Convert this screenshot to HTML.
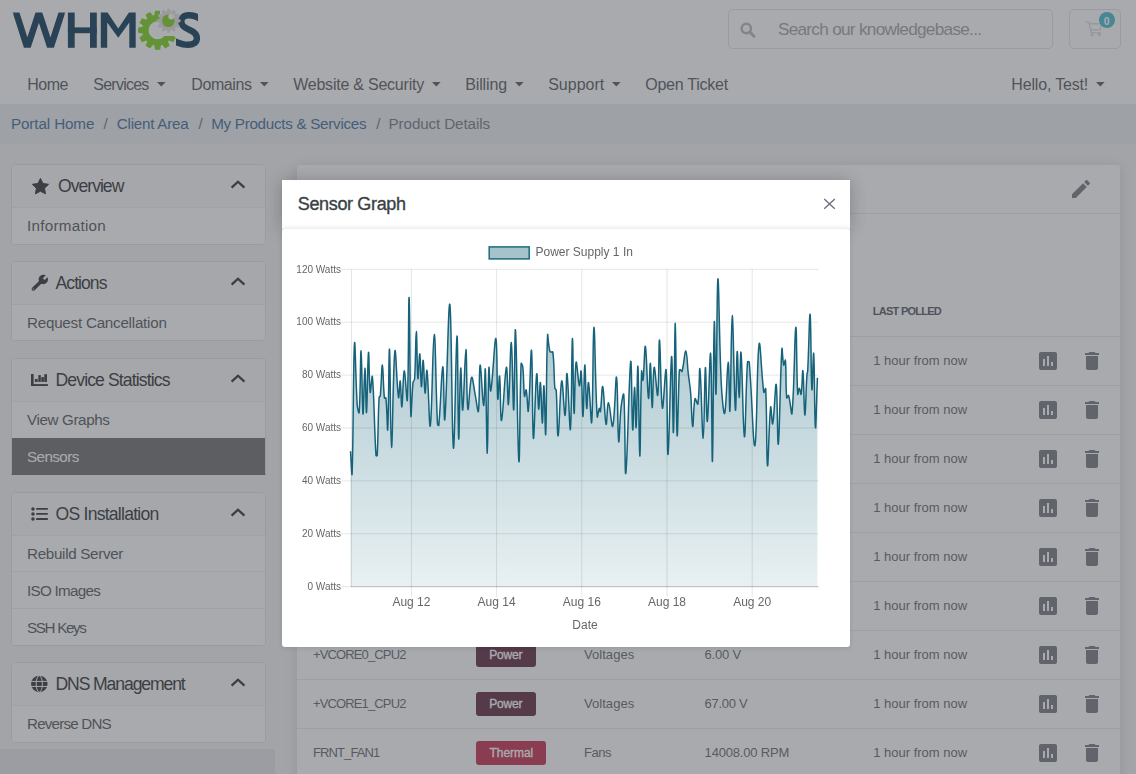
<!DOCTYPE html>
<html lang="en"><head><meta charset="utf-8"><title>Product Details</title>
<style>
*{box-sizing:border-box;margin:0;padding:0}
html,body{width:1136px;height:774px;overflow:hidden;background:#f1f2f4}
body{font-family:"Liberation Sans",sans-serif;position:relative}
.abs{position:absolute}
.t{position:absolute;white-space:nowrap;line-height:1;display:block}
#page{position:absolute;left:0;top:0;width:1136px;height:774px;overflow:hidden;background:#f1f2f4}
#hdr{position:absolute;left:0;top:0;width:1136px;height:104px;background:#fff}
#bc{position:absolute;left:0;top:104px;width:1136px;height:39.5px;background:#e9ecef}
.sb{position:absolute;left:11px;width:255px;background:#fff;border:1px solid #e0e1e4;border-radius:4px;overflow:hidden}
.sbh{position:absolute;left:0;top:0;width:100%;background:#f8f8f9;border-bottom:1px solid #e0e1e4}
.sbr{position:absolute;left:0;width:100%;border-top:1px solid #ebecee;background:#fff}
.sbr.act{background:#666;border-color:#666}
#card{position:absolute;left:297px;top:165px;width:823px;height:640px;background:#fff;border-radius:3px;box-shadow:0 1px 12px rgba(20,25,40,.13)}
.hl{position:absolute;left:0;width:100%;height:1px;background:#e6e8ee}
.badge{position:absolute;height:24px;border-radius:3px}
#ov{position:absolute;left:0;top:0;width:1136px;height:774px;background:rgba(83,85,91,.5)}
#mb{position:absolute;left:282px;top:228px;width:568px;height:419px;background:#fff;border-top:1px solid #eceef3;border-radius:3px;box-shadow:0 1px 5px rgba(0,0,0,.10)}
#mh{position:absolute;left:282px;top:180px;width:568px;height:48.5px;background:linear-gradient(#fff 0,#fff 42px,#fbfbfc 48.5px);box-shadow:0 1px 17px rgba(0,0,0,.23)}
svg{position:absolute;overflow:visible}
.cv{opacity:.999;will-change:opacity}
</style></head><body>
<div id="page">
<div id="hdr">
<svg style="left:0;top:0" width="220" height="60" viewBox="0 0 220 60"><defs><clipPath id="lc"><rect x="0" y="12.55" width="220" height="35.3"/></clipPath></defs><g clip-path="url(#lc)"><polyline points="16.1,12.55 27.3,47.8 38.9,12.55 50.5,47.8 61.85,12.55" fill="none" stroke="#002e50" stroke-width="6.45" stroke-linejoin="miter" stroke-miterlimit="10" stroke-linecap="butt" transform="translate(0,0)"/><line x1="16.1" y1="12.55" x2="14.5" y2="7.5" stroke="#002e50" stroke-width="6.45"/><line x1="61.85" y1="12.55" x2="63.5" y2="7.4" stroke="#002e50" stroke-width="6.45"/></g><g fill="#002e50"><rect x="67.9" y="12.55" width="6.8" height="35.25"/><rect x="90" y="12.55" width="6.8" height="35.25"/><rect x="67.9" y="27.4" width="28.9" height="5.8"/><polygon points="100.8,47.8 100.8,12.55 107.6,12.55 118.25,28.6 128.9,12.55 135.7,12.55 135.7,47.8 129.3,47.8 129.3,22.6 118.25,37.8 107.2,22.6 107.2,47.8"/></g><defs><clipPath id="gc"><path d="M120 -10H160V35.9H215V80H120Z"/></clipPath></defs><g clip-path="url(#gc)"><path d="M154.26 15.27L155.03 10.67L160.17 10.67L160.94 15.27L162.18 15.60L165.14 12.00L169.59 14.57L167.96 18.94L168.86 19.84L173.23 18.21L175.80 22.66L172.20 25.62L172.53 26.86L177.13 27.63L177.13 32.77L172.53 33.54L172.20 34.78L175.80 37.74L173.23 42.19L168.86 40.56L167.96 41.46L169.59 45.83L165.14 48.40L162.18 44.80L160.94 45.13L160.17 49.73L155.03 49.73L154.26 45.13L153.02 44.80L150.06 48.40L145.61 45.83L147.24 41.46L146.34 40.56L141.97 42.19L139.40 37.74L143.00 34.78L142.67 33.54L138.07 32.77L138.07 27.63L142.67 26.86L143.00 25.62L139.40 22.66L141.97 18.21L146.34 19.84L147.24 18.94L145.61 14.57L150.06 12.00L153.02 15.60Z M157.60 21.20 a9 9 0 1 0 0.01 0Z" fill="#72d010" fill-rule="evenodd"/></g><defs><clipPath id="sc"><path d="M176 0H198V25H202V60H176Z"/></clipPath></defs><g clip-path="url(#sc)"><path d="M201 19.6C197.6 16.4 193.6 15.2 188.4 15.2C183.6 15.2 181.3 18.2 181.3 21.6C181.3 25.8 184.6 27.9 189.2 29.8C194.4 31.9 196.9 34 196.9 38.3C196.9 42.5 193.4 44.8 188 44.8C183 44.8 178.4 43.2 173 40.6" fill="none" stroke="#002e50" stroke-width="6.4"/></g><path d="M166.90 11.37L167.45 8.87L169.95 8.87L170.50 11.37L171.86 11.73L173.58 9.84L175.75 11.09L174.97 13.53L175.97 14.53L178.41 13.75L179.66 15.92L177.77 17.64L178.13 19.00L180.63 19.55L180.63 22.05L178.13 22.60L177.77 23.96L179.66 25.68L178.41 27.85L175.97 27.07L174.97 28.07L175.75 30.51L173.58 31.76L171.86 29.87L170.50 30.23L169.95 32.73L167.45 32.73L166.90 30.23L165.54 29.87L163.82 31.76L161.65 30.51L162.43 28.07L161.43 27.07L158.99 27.85L157.74 25.68L159.63 23.96L159.27 22.60L156.77 22.05L156.77 19.55L159.27 19.00L159.63 17.64L157.74 15.92L158.99 13.75L161.43 14.53L162.43 13.53L161.65 11.09L163.82 9.84L165.54 11.73Z" fill="#dedde0"/><circle cx="168.4" cy="20.8" r="6.3" fill="#72d010"/><circle cx="171.3" cy="16.6" r="3.0" fill="#fff"/></svg>
<div class="abs" style="left:728px;top:9px;width:324.5px;height:39.5px;border:1px solid #dfe1e5;border-radius:5px;background:#fff"></div>
<svg style="left:740px;top:22px" width="16" height="16" viewBox="0 0 16 16"><circle cx="6.3" cy="6.5" r="4.65" fill="none" stroke="#b3b4b8" stroke-width="2.5"/><line x1="9.9" y1="10.1" x2="14" y2="14.2" stroke="#b3b4b8" stroke-width="2.9" stroke-linecap="round"/></svg>
<span class="t" style="left:777.90px;top:20.54px;font-size:17.2px;color:#989ba2;letter-spacing:-0.711px;">Search our knowledgebase...</span>
<div class="abs" style="left:1069px;top:9px;width:52px;height:39.5px;border:1px solid #dfe1e5;border-radius:5px;background:#fff"></div>
<svg style="left:1085px;top:20px" width="20" height="18" viewBox="0 0 20 18"><g fill="none" stroke="#d4d5d9" stroke-width="1.15" stroke-linejoin="round" stroke-linecap="round"><path d="M1.2 2.1h2.6l2.4 10.6h9.4"/><path d="M4.4 3.9h11.9l-1.1 5.9H5.7"/><circle cx="7.2" cy="14.6" r="1.2"/><circle cx="14.3" cy="14.6" r="1.2"/></g></svg>
<div class="abs" style="left:1098.9px;top:12px;width:16px;height:16px;border-radius:8px;background:#39b9cb"></div>
<span class="t" style="left:1103.70px;top:15.61px;font-size:10.5px;color:#fff;font-weight:700;">0</span>
<span class="t" style="left:27.20px;top:76.56px;font-size:16px;color:#4c5158;letter-spacing:-0.494px;">Home</span>
<span class="t" style="left:93.30px;top:76.56px;font-size:16px;color:#4c5158;letter-spacing:-0.765px;">Services</span>
<svg style="left:157.4px;top:82.2px" width="9" height="5" viewBox="0 0 9 5"><path d="M0 0h8.6L4.3 4.6z" fill="#4c5158"/></svg>
<span class="t" style="left:191.30px;top:76.56px;font-size:16px;color:#4c5158;letter-spacing:-0.406px;">Domains</span>
<svg style="left:260.0px;top:82.2px" width="9" height="5" viewBox="0 0 9 5"><path d="M0 0h8.6L4.3 4.6z" fill="#4c5158"/></svg>
<span class="t" style="left:293.20px;top:76.56px;font-size:16px;color:#4c5158;letter-spacing:-0.228px;">Website &amp; Security</span>
<svg style="left:432.0px;top:82.2px" width="9" height="5" viewBox="0 0 9 5"><path d="M0 0h8.6L4.3 4.6z" fill="#4c5158"/></svg>
<span class="t" style="left:465.20px;top:76.56px;font-size:16px;color:#4c5158;letter-spacing:-0.115px;">Billing</span>
<svg style="left:515.0px;top:82.2px" width="9" height="5" viewBox="0 0 9 5"><path d="M0 0h8.6L4.3 4.6z" fill="#4c5158"/></svg>
<span class="t" style="left:548.20px;top:76.56px;font-size:16px;color:#4c5158;letter-spacing:-0.007px;">Support</span>
<svg style="left:612.0px;top:82.2px" width="9" height="5" viewBox="0 0 9 5"><path d="M0 0h8.6L4.3 4.6z" fill="#4c5158"/></svg>
<span class="t" style="left:645.20px;top:76.56px;font-size:16px;color:#4c5158;letter-spacing:-0.238px;">Open Ticket</span>
<span class="t" style="left:1011.30px;top:76.56px;font-size:16px;color:#4c5158;letter-spacing:-0.168px;">Hello, Test!</span>
<svg style="left:1096.0px;top:82.2px" width="9" height="5" viewBox="0 0 9 5"><path d="M0 0h8.6L4.3 4.6z" fill="#4c5158"/></svg>
</div>
<div id="bc"></div>
<span class="t" style="left:11.00px;top:116.23px;font-size:15.2px;color:#336699;letter-spacing:-0.108px;">Portal Home</span>
<span class="t" style="left:103.60px;top:116.23px;font-size:15.2px;color:#6c757d;">/</span>
<span class="t" style="left:116.80px;top:116.23px;font-size:15.2px;color:#336699;letter-spacing:-0.236px;">Client Area</span>
<span class="t" style="left:198.60px;top:116.23px;font-size:15.2px;color:#6c757d;">/</span>
<span class="t" style="left:211.20px;top:116.23px;font-size:15.2px;color:#336699;letter-spacing:-0.278px;">My Products &amp; Services</span>
<span class="t" style="left:376.20px;top:116.23px;font-size:15.2px;color:#6c757d;">/</span>
<span class="t" style="left:388.60px;top:116.23px;font-size:15.2px;color:#6c757d;letter-spacing:-0.112px;">Product Details</span>
<div class="abs" style="left:0;top:748.8px;width:275px;height:30px;background:#e2e5ea"></div>
<div class="sb" style="top:164.15px;height:80.40px">
<div class="sbh" style="height:42.7px"></div>
<div class="sbr" style="top:41.70px;height:37.70px"></div>
</div>
<span class="t" style="left:58.00px;top:178.20px;font-size:17.6px;color:#23272c;letter-spacing:-0.993px;">Overview</span>
<svg style="left:230.0px;top:179.0px" width="16" height="10" viewBox="0 0 16 10"><polyline points="1.6,8.6 8,2.7 14.4,8.6" fill="none" stroke="#23272c" stroke-width="2.3" stroke-linejoin="miter"/></svg>
<span class="t" style="left:27.00px;top:218.28px;font-size:15.2px;color:#495057;letter-spacing:0.276px;">Information</span>
<svg style="left:0;top:0" width="60" height="200"><polygon points="40.45,178.40 42.95,183.51 48.58,184.31 44.49,188.26 45.48,193.87 40.45,191.20 35.42,193.87 36.41,188.26 32.32,184.31 37.95,183.51" fill="#23272c" stroke="#23272c" stroke-width="1.0" stroke-linejoin="round"/></svg>
<div class="sb" style="top:261.10px;height:80.40px">
<div class="sbh" style="height:42.7px"></div>
<div class="sbr" style="top:41.70px;height:37.70px"></div>
</div>
<span class="t" style="left:55.50px;top:275.30px;font-size:17.6px;color:#23272c;letter-spacing:-0.953px;">Actions</span>
<svg style="left:230.0px;top:275.9px" width="16" height="10" viewBox="0 0 16 10"><polyline points="1.6,8.6 8,2.7 14.4,8.6" fill="none" stroke="#23272c" stroke-width="2.3" stroke-linejoin="miter"/></svg>
<span class="t" style="left:27.00px;top:315.23px;font-size:15.2px;color:#495057;letter-spacing:-0.236px;">Request Cancellation</span>
<svg style="left:0;top:0" width="60" height="300"><line x1="33.4" y1="289.0" x2="41.6" y2="280.9" stroke="#23272c" stroke-width="3.5" stroke-linecap="round"/><g transform="translate(43.3,279.5) rotate(-45)"><circle r="4.7" fill="#23272c"/><rect x="0.6" y="-1.25" width="6" height="2.5" fill="#f8f8f9"/></g><circle cx="33.3" cy="289.1" r="0.65" fill="#f8f8f9"/></svg>
<div class="sb" style="top:358.30px;height:117.10px;border-radius:4px 4px 0 0;border-bottom-color:#666">
<div class="sbh" style="height:42.7px"></div>
<div class="sbr" style="top:41.70px;height:37.70px"></div>
<div class="sbr act" style="top:78.40px;height:37.70px"></div>
</div>
<span class="t" style="left:55.50px;top:372.30px;font-size:17.6px;color:#23272c;letter-spacing:-0.882px;">Device Statistics</span>
<svg style="left:230.0px;top:373.1px" width="16" height="10" viewBox="0 0 16 10"><polyline points="1.6,8.6 8,2.7 14.4,8.6" fill="none" stroke="#23272c" stroke-width="2.3" stroke-linejoin="miter"/></svg>
<span class="t" style="left:27.00px;top:412.43px;font-size:15.2px;color:#495057;letter-spacing:-0.374px;">View Graphs</span>
<span class="t" style="left:27.00px;top:449.13px;font-size:15.2px;color:#fff;letter-spacing:-0.577px;">Sensors</span>
<svg style="left:31px;top:373.8px" width="17" height="12" viewBox="0 0 17 12"><g fill="#23272c"><rect x="0" y="0" width="2.6" height="12"/><rect x="0" y="10.1" width="16.9" height="1.9"/><rect x="3.85" y="5" width="2.85" height="2.9"/><rect x="7.3" y="1.1" width="2.5" height="6.8"/><rect x="10.3" y="3.05" width="2.6" height="4.85"/><rect x="13.25" y="0.2" width="2.75" height="7.7"/></g></svg>
<div class="sb" style="top:492.00px;height:153.80px">
<div class="sbh" style="height:42.7px"></div>
<div class="sbr" style="top:41.70px;height:37.70px"></div>
<div class="sbr" style="top:78.40px;height:37.70px"></div>
<div class="sbr" style="top:115.10px;height:37.70px"></div>
</div>
<span class="t" style="left:55.50px;top:506.10px;font-size:17.6px;color:#23272c;letter-spacing:-0.762px;">OS Installation</span>
<svg style="left:230.0px;top:506.8px" width="16" height="10" viewBox="0 0 16 10"><polyline points="1.6,8.6 8,2.7 14.4,8.6" fill="none" stroke="#23272c" stroke-width="2.3" stroke-linejoin="miter"/></svg>
<span class="t" style="left:27.00px;top:546.13px;font-size:15.2px;color:#495057;letter-spacing:-0.311px;">Rebuild Server</span>
<span class="t" style="left:27.00px;top:582.83px;font-size:15.2px;color:#495057;letter-spacing:-0.717px;">ISO Images</span>
<span class="t" style="left:27.00px;top:619.53px;font-size:15.2px;color:#495057;letter-spacing:-1.324px;">SSH Keys</span>
<svg style="left:31px;top:507px" width="17" height="14" viewBox="0 0 17 14"><circle cx="1.95" cy="1.90" r="1.75" fill="#23272c"/><rect x="5.1" y="0.95" width="11.8" height="1.9" rx="0.5" fill="#23272c"/><circle cx="1.95" cy="6.90" r="1.75" fill="#23272c"/><rect x="5.1" y="5.95" width="11.8" height="1.9" rx="0.5" fill="#23272c"/><circle cx="1.95" cy="12.00" r="1.75" fill="#23272c"/><rect x="5.1" y="11.05" width="11.8" height="1.9" rx="0.5" fill="#23272c"/></svg>
<div class="sb" style="top:662.30px;height:80.40px">
<div class="sbh" style="height:42.7px"></div>
<div class="sbr" style="top:41.70px;height:37.70px"></div>
</div>
<span class="t" style="left:55.50px;top:676.10px;font-size:17.6px;color:#23272c;letter-spacing:-1.114px;">DNS Management</span>
<svg style="left:230.0px;top:677.1px" width="16" height="10" viewBox="0 0 16 10"><polyline points="1.6,8.6 8,2.7 14.4,8.6" fill="none" stroke="#23272c" stroke-width="2.3" stroke-linejoin="miter"/></svg>
<span class="t" style="left:27.00px;top:716.43px;font-size:15.2px;color:#495057;letter-spacing:-0.812px;">Reverse DNS</span>
<svg style="left:0;top:0" width="60" height="700"><circle cx="39.3" cy="683.9" r="8.25" fill="#23272c"/><g stroke="#f8f8f9" stroke-width="1.0" fill="none"><ellipse cx="39.3" cy="683.9" rx="3.1" ry="8.25"/><line x1="30" y1="681.4" x2="49" y2="681.4"/><line x1="30" y1="686.45" x2="49" y2="686.45"/></g></svg>
<div id="card">
<div class="hl" style="top:48px"></div>
<div class="hl" style="top:171px"></div>
<div class="hl" style="top:220px"></div>
<div class="hl" style="top:269px"></div>
<div class="hl" style="top:318px"></div>
<div class="hl" style="top:367px"></div>
<div class="hl" style="top:416px"></div>
<div class="hl" style="top:465px"></div>
<div class="hl" style="top:514px"></div>
<div class="hl" style="top:563px"></div>
<div class="hl" style="top:612px"></div>
</div>
<svg style="left:1069px;top:176.8px" width="24" height="24" viewBox="0 0 24 24"><path fill="#6e727a" d="M3 17.25V21h3.75L17.81 9.94l-3.75-3.75L3 17.25zM20.71 7.04c.39-.39.39-1.02 0-1.41l-2.34-2.34c-.39-.39-1.02-.39-1.41 0l-1.83 1.83 3.75 3.75 1.83-1.83z"/></svg>
<span class="t" style="left:872.80px;top:305.79px;font-size:11px;color:#4a4f59;letter-spacing:-0.739px;font-weight:700;">LAST POLLED</span>
<span class="t" style="left:873.20px;top:353.90px;font-size:13px;color:#5a5f68;">1 hour from now</span>
<svg style="left:1036.4px;top:349.0px" width="24" height="24" viewBox="0 0 24 24"><path fill="#6e727a" d="M19 3H5c-1.1 0-2 .9-2 2v14c0 1.1.9 2 2 2h14c1.1 0 2-.9 2-2V5c0-1.1-.9-2-2-2zM9 17H7v-7h2v7zm4 0h-2V7h2v10zm4 0h-2v-4h2v4z"/></svg>
<svg style="left:1079.5px;top:349.0px" width="24" height="24" viewBox="0 0 24 24"><path fill="#6e727a" d="M6 19c0 1.1.9 2 2 2h8c1.1 0 2-.9 2-2V7H6v12zM19 4h-3.5l-1-1h-5l-1 1H5v2h14V4z"/></svg>
<span class="t" style="left:873.20px;top:402.90px;font-size:13px;color:#5a5f68;">1 hour from now</span>
<svg style="left:1036.4px;top:398.0px" width="24" height="24" viewBox="0 0 24 24"><path fill="#6e727a" d="M19 3H5c-1.1 0-2 .9-2 2v14c0 1.1.9 2 2 2h14c1.1 0 2-.9 2-2V5c0-1.1-.9-2-2-2zM9 17H7v-7h2v7zm4 0h-2V7h2v10zm4 0h-2v-4h2v4z"/></svg>
<svg style="left:1079.5px;top:398.0px" width="24" height="24" viewBox="0 0 24 24"><path fill="#6e727a" d="M6 19c0 1.1.9 2 2 2h8c1.1 0 2-.9 2-2V7H6v12zM19 4h-3.5l-1-1h-5l-1 1H5v2h14V4z"/></svg>
<span class="t" style="left:873.20px;top:451.90px;font-size:13px;color:#5a5f68;">1 hour from now</span>
<svg style="left:1036.4px;top:447.0px" width="24" height="24" viewBox="0 0 24 24"><path fill="#6e727a" d="M19 3H5c-1.1 0-2 .9-2 2v14c0 1.1.9 2 2 2h14c1.1 0 2-.9 2-2V5c0-1.1-.9-2-2-2zM9 17H7v-7h2v7zm4 0h-2V7h2v10zm4 0h-2v-4h2v4z"/></svg>
<svg style="left:1079.5px;top:447.0px" width="24" height="24" viewBox="0 0 24 24"><path fill="#6e727a" d="M6 19c0 1.1.9 2 2 2h8c1.1 0 2-.9 2-2V7H6v12zM19 4h-3.5l-1-1h-5l-1 1H5v2h14V4z"/></svg>
<span class="t" style="left:873.20px;top:500.90px;font-size:13px;color:#5a5f68;">1 hour from now</span>
<svg style="left:1036.4px;top:496.0px" width="24" height="24" viewBox="0 0 24 24"><path fill="#6e727a" d="M19 3H5c-1.1 0-2 .9-2 2v14c0 1.1.9 2 2 2h14c1.1 0 2-.9 2-2V5c0-1.1-.9-2-2-2zM9 17H7v-7h2v7zm4 0h-2V7h2v10zm4 0h-2v-4h2v4z"/></svg>
<svg style="left:1079.5px;top:496.0px" width="24" height="24" viewBox="0 0 24 24"><path fill="#6e727a" d="M6 19c0 1.1.9 2 2 2h8c1.1 0 2-.9 2-2V7H6v12zM19 4h-3.5l-1-1h-5l-1 1H5v2h14V4z"/></svg>
<span class="t" style="left:873.20px;top:549.90px;font-size:13px;color:#5a5f68;">1 hour from now</span>
<svg style="left:1036.4px;top:545.0px" width="24" height="24" viewBox="0 0 24 24"><path fill="#6e727a" d="M19 3H5c-1.1 0-2 .9-2 2v14c0 1.1.9 2 2 2h14c1.1 0 2-.9 2-2V5c0-1.1-.9-2-2-2zM9 17H7v-7h2v7zm4 0h-2V7h2v10zm4 0h-2v-4h2v4z"/></svg>
<svg style="left:1079.5px;top:545.0px" width="24" height="24" viewBox="0 0 24 24"><path fill="#6e727a" d="M6 19c0 1.1.9 2 2 2h8c1.1 0 2-.9 2-2V7H6v12zM19 4h-3.5l-1-1h-5l-1 1H5v2h14V4z"/></svg>
<span class="t" style="left:873.20px;top:598.90px;font-size:13px;color:#5a5f68;">1 hour from now</span>
<svg style="left:1036.4px;top:594.0px" width="24" height="24" viewBox="0 0 24 24"><path fill="#6e727a" d="M19 3H5c-1.1 0-2 .9-2 2v14c0 1.1.9 2 2 2h14c1.1 0 2-.9 2-2V5c0-1.1-.9-2-2-2zM9 17H7v-7h2v7zm4 0h-2V7h2v10zm4 0h-2v-4h2v4z"/></svg>
<svg style="left:1079.5px;top:594.0px" width="24" height="24" viewBox="0 0 24 24"><path fill="#6e727a" d="M6 19c0 1.1.9 2 2 2h8c1.1 0 2-.9 2-2V7H6v12zM19 4h-3.5l-1-1h-5l-1 1H5v2h14V4z"/></svg>
<span class="t" style="left:873.20px;top:647.90px;font-size:13px;color:#5a5f68;">1 hour from now</span>
<svg style="left:1036.4px;top:643.0px" width="24" height="24" viewBox="0 0 24 24"><path fill="#6e727a" d="M19 3H5c-1.1 0-2 .9-2 2v14c0 1.1.9 2 2 2h14c1.1 0 2-.9 2-2V5c0-1.1-.9-2-2-2zM9 17H7v-7h2v7zm4 0h-2V7h2v10zm4 0h-2v-4h2v4z"/></svg>
<svg style="left:1079.5px;top:643.0px" width="24" height="24" viewBox="0 0 24 24"><path fill="#6e727a" d="M6 19c0 1.1.9 2 2 2h8c1.1 0 2-.9 2-2V7H6v12zM19 4h-3.5l-1-1h-5l-1 1H5v2h14V4z"/></svg>
<span class="t" style="left:873.20px;top:696.90px;font-size:13px;color:#5a5f68;">1 hour from now</span>
<svg style="left:1036.4px;top:692.0px" width="24" height="24" viewBox="0 0 24 24"><path fill="#6e727a" d="M19 3H5c-1.1 0-2 .9-2 2v14c0 1.1.9 2 2 2h14c1.1 0 2-.9 2-2V5c0-1.1-.9-2-2-2zM9 17H7v-7h2v7zm4 0h-2V7h2v10zm4 0h-2v-4h2v4z"/></svg>
<svg style="left:1079.5px;top:692.0px" width="24" height="24" viewBox="0 0 24 24"><path fill="#6e727a" d="M6 19c0 1.1.9 2 2 2h8c1.1 0 2-.9 2-2V7H6v12zM19 4h-3.5l-1-1h-5l-1 1H5v2h14V4z"/></svg>
<span class="t" style="left:873.20px;top:745.90px;font-size:13px;color:#5a5f68;">1 hour from now</span>
<svg style="left:1036.4px;top:741.0px" width="24" height="24" viewBox="0 0 24 24"><path fill="#6e727a" d="M19 3H5c-1.1 0-2 .9-2 2v14c0 1.1.9 2 2 2h14c1.1 0 2-.9 2-2V5c0-1.1-.9-2-2-2zM9 17H7v-7h2v7zm4 0h-2V7h2v10zm4 0h-2v-4h2v4z"/></svg>
<svg style="left:1079.5px;top:741.0px" width="24" height="24" viewBox="0 0 24 24"><path fill="#6e727a" d="M6 19c0 1.1.9 2 2 2h8c1.1 0 2-.9 2-2V7H6v12zM19 4h-3.5l-1-1h-5l-1 1H5v2h14V4z"/></svg>
<span class="t" style="left:313.00px;top:647.90px;font-size:13px;color:#5a5f68;letter-spacing:-0.869px;">+VCORE0_CPU2</span>
<div class="badge" style="left:476px;top:643px;width:60px;background:#561f36"></div>
<span class="t" style="left:489.30px;top:649.24px;font-size:12px;color:#fff;letter-spacing:-0.179px;-webkit-text-stroke:0.3px #fff;">Power</span>
<span class="t" style="left:584.00px;top:647.90px;font-size:13px;color:#5a5f68;letter-spacing:0.046px;">Voltages</span>
<span class="t" style="left:704.60px;top:647.90px;font-size:13px;color:#5a5f68;letter-spacing:-0.217px;">6.00 V</span>
<span class="t" style="left:313.00px;top:696.90px;font-size:13px;color:#5a5f68;letter-spacing:-0.869px;">+VCORE1_CPU2</span>
<div class="badge" style="left:476px;top:692px;width:60px;background:#561f36"></div>
<span class="t" style="left:489.30px;top:698.24px;font-size:12px;color:#fff;letter-spacing:-0.179px;-webkit-text-stroke:0.3px #fff;">Power</span>
<span class="t" style="left:584.00px;top:696.90px;font-size:13px;color:#5a5f68;letter-spacing:0.046px;">Voltages</span>
<span class="t" style="left:704.60px;top:696.90px;font-size:13px;color:#5a5f68;letter-spacing:-0.269px;">67.00 V</span>
<span class="t" style="left:313.00px;top:745.90px;font-size:13px;color:#5a5f68;letter-spacing:-0.900px;">FRNT_FAN1</span>
<div class="badge" style="left:476px;top:741px;width:70px;background:#c12346"></div>
<span class="t" style="left:489.50px;top:747.24px;font-size:12px;color:#fff;letter-spacing:-0.052px;-webkit-text-stroke:0.3px #fff;">Thermal</span>
<span class="t" style="left:584.00px;top:745.90px;font-size:13px;color:#5a5f68;letter-spacing:-0.434px;">Fans</span>
<span class="t" style="left:704.60px;top:745.90px;font-size:13px;color:#5a5f68;letter-spacing:-0.175px;">14008.00 RPM</span>
</div>
<div id="ov"></div>
<div id="mh"></div><div id="mb"></div>
<span class="t" style="left:297.80px;top:194.76px;font-size:18px;color:#3a3f45;letter-spacing:-0.351px;-webkit-text-stroke:0.35px #3a3f45;">Sensor Graph</span>
<svg style="left:823px;top:198px" width="13" height="12" viewBox="0 0 13 12"><path d="M1.2 1.0L11.8 10.8M11.8 1.0L1.2 10.8" stroke="#6b707a" stroke-width="1.35" fill="none"/></svg>
<svg style="left:0;top:0" width="1136" height="774" viewBox="0 0 1136 774"><defs><linearGradient id="cg" gradientUnits="userSpaceOnUse" x1="0" y1="269" x2="0" y2="587"><stop offset="0" stop-color="#1d6a7e" stop-opacity="0.42"/><stop offset="1" stop-color="#1d6a7e" stop-opacity="0.10"/></linearGradient></defs><path d="M350.5 451.2C351.1 460.1 351.9 479.8 352.1 473.5C353.5 436.8 353.1 361.8 354.5 343.6C355.2 334.8 355.6 381.1 357.3 406.0C357.5 408.7 359.0 414.7 359.2 412.5C360.6 392.6 360.3 350.5 361.1 350.8C361.9 351.1 362.1 410.0 363.0 414.0C363.6 416.9 364.2 368.5 364.9 368.2C365.6 367.9 365.9 415.2 366.5 412.5C367.3 408.9 367.6 357.4 368.5 352.5C369.1 349.3 369.1 385.4 370.2 392.3C370.6 395.0 372.0 372.5 372.4 376.7C374.3 397.8 374.1 424.5 376.0 455.6C376.0 456.1 377.2 456.1 377.2 455.6C378.4 432.8 377.9 420.6 379.1 397.5C379.1 396.7 380.2 396.6 380.3 395.8C381.5 383.7 381.6 364.7 382.4 365.1C383.2 365.6 383.1 385.4 384.4 398.0C384.5 398.6 385.8 397.4 385.9 398.0C387.2 410.0 387.3 434.9 387.7 429.4C388.7 415.4 388.8 345.9 389.5 349.2C390.3 353.2 390.4 447.1 391.5 447.5C392.6 447.9 393.0 364.7 394.9 351.2C395.8 344.7 396.9 388.7 398.5 397.5C399.1 400.6 399.7 379.5 400.2 381.0C401.0 383.3 401.2 408.5 401.9 406.8C402.8 404.4 403.0 372.4 404.2 370.9C405.2 369.7 406.9 406.5 407.3 400.0C408.8 377.2 408.4 294.6 409.1 297.5C409.9 300.8 409.7 388.8 410.9 415.4C411.2 422.8 411.7 395.6 413.0 382.6C413.2 381.0 414.5 380.6 414.6 379.0C415.8 360.2 415.6 331.7 416.3 331.6C417.0 331.5 417.0 372.8 417.9 378.6C418.4 381.7 419.2 352.5 419.8 353.9C420.6 355.7 420.6 385.2 421.4 386.6C422.0 387.8 422.5 359.2 423.2 360.4C424.0 361.8 424.2 390.7 425.1 393.1C425.7 394.8 426.4 366.9 427.0 370.7C428.5 380.0 429.2 431.4 430.3 425.9C432.1 416.8 432.7 334.8 434.2 334.4C435.6 334.0 435.7 388.4 437.5 424.0C437.5 424.8 438.7 426.1 438.8 425.4C440.9 403.2 441.5 368.1 442.8 366.8C443.9 365.7 443.9 427.2 444.8 419.4C446.7 402.2 448.3 299.2 449.8 304.3C451.7 310.7 451.8 440.8 453.4 448.0C454.7 453.6 455.9 338.0 457.0 336.1C458.0 334.3 457.8 431.2 458.7 438.8C459.3 444.0 459.7 375.5 460.7 368.3C461.3 364.0 461.9 413.1 462.7 410.0C463.9 405.5 464.9 349.6 465.9 349.4C466.9 349.2 466.4 401.9 467.9 409.2C468.7 413.1 469.7 381.1 471.6 377.4C472.6 375.3 473.8 387.8 475.2 394.7C476.5 401.3 477.9 414.5 478.4 411.3C479.8 402.6 479.0 366.3 480.1 365.1C481.1 364.0 482.5 404.6 483.6 405.5C484.6 406.3 484.9 363.6 485.3 369.4C486.3 382.8 486.6 453.6 487.3 453.3C488.0 453.0 487.8 387.5 488.9 367.8C489.2 362.5 489.9 394.3 490.8 390.7C492.7 382.5 494.6 336.9 495.9 338.4C497.4 340.2 496.7 388.1 497.8 399.0C498.2 403.1 499.1 373.2 499.6 376.1C500.6 381.8 500.3 422.1 501.5 420.5C503.0 418.6 504.8 371.1 506.4 367.3C507.5 364.7 507.7 408.1 508.4 404.4C509.6 398.2 510.3 341.5 511.3 342.6C512.4 343.8 512.9 412.3 513.7 410.0C514.6 407.3 514.7 322.4 515.5 330.2C516.8 343.0 517.6 453.7 518.9 461.4C519.9 467.1 519.6 400.1 521.1 363.7C521.2 362.3 522.6 365.5 522.8 367.0C524.0 378.6 523.4 388.8 524.5 396.3C524.8 398.0 525.8 388.5 526.2 389.9C527.4 394.3 527.8 415.0 528.3 410.9C529.9 399.2 530.7 345.9 531.5 350.4C532.7 356.9 532.2 432.9 533.4 438.3C534.3 442.3 535.3 381.5 536.7 374.0C537.5 369.9 537.9 407.2 538.7 409.2C539.3 410.7 539.8 380.4 540.4 382.6C541.3 385.9 541.6 422.3 542.3 423.0C543.0 423.6 543.3 383.8 543.9 385.8C544.7 388.4 545.2 440.9 545.7 434.3C546.7 420.7 546.1 363.5 547.6 335.3C547.8 330.5 548.2 346.0 550.0 351.8C550.3 352.8 552.7 351.1 552.8 352.2C554.6 365.7 553.6 374.0 554.9 388.3C555.0 389.1 556.1 389.1 556.2 389.9C557.4 408.1 557.1 437.5 558.1 435.9C559.3 434.0 560.0 386.0 561.7 381.0C562.8 377.8 564.1 416.8 565.1 415.4C566.3 413.8 566.1 371.1 567.0 373.5C568.2 376.7 569.6 434.7 570.4 429.4C571.7 420.8 571.6 342.2 572.4 338.7C573.1 335.8 573.2 407.7 574.1 413.3C574.7 417.1 574.7 369.8 576.1 362.3C576.8 358.8 578.2 383.6 579.4 385.8C580.2 387.2 580.7 368.2 581.1 371.2C582.2 380.5 582.3 417.7 583.0 416.5C583.8 415.2 584.0 366.8 584.8 365.0C585.5 363.5 585.8 404.0 586.7 408.4C587.3 411.0 587.7 380.4 588.5 382.6C589.7 385.9 591.1 428.7 591.7 422.2C593.2 406.6 592.8 328.5 593.9 327.4C595.0 326.4 595.2 387.3 597.2 416.8C597.4 419.7 598.4 409.9 599.3 408.4C599.7 407.8 600.2 412.8 600.4 411.7C601.6 404.0 601.8 384.6 602.7 386.6C604.1 389.6 604.6 420.2 606.1 424.3C606.9 426.7 607.2 402.4 608.5 402.8C609.9 403.2 611.7 429.5 612.7 426.2C614.9 419.3 615.5 374.5 616.5 377.2C617.9 380.7 617.5 433.8 618.7 441.5C619.3 445.7 619.6 420.6 621.1 406.8C621.6 401.9 623.5 391.1 623.8 394.7C625.4 417.7 624.7 478.8 625.8 473.3C627.4 465.6 629.0 372.5 630.7 361.7C631.7 355.1 631.8 423.4 632.7 429.7C633.3 433.6 633.8 387.9 634.5 387.4C635.2 387.0 635.6 430.8 636.1 427.5C636.9 422.4 637.3 361.8 637.9 366.4C638.8 373.2 639.0 455.1 639.8 456.1C640.5 457.0 640.4 398.6 641.6 371.2C641.7 368.3 642.7 382.3 643.0 380.2C644.2 372.4 644.5 343.6 645.4 346.5C646.7 350.9 647.3 394.4 648.5 398.4C649.3 401.1 649.7 361.8 650.4 363.4C651.2 365.5 651.4 406.8 652.2 407.6C652.9 408.3 652.9 370.2 654.2 367.3C655.1 365.3 657.0 398.9 657.7 395.2C659.1 388.0 658.7 337.8 659.5 340.1C660.5 342.9 660.7 400.3 662.4 408.0C663.3 412.3 665.4 364.2 666.1 370.0C667.6 382.8 667.0 456.9 668.0 454.4C669.2 451.5 670.4 361.7 671.6 356.7C672.5 352.8 672.8 437.8 673.4 432.3C674.3 424.4 674.6 322.6 675.3 323.2C676.0 323.8 676.1 422.8 677.1 435.1C677.7 442.1 678.1 396.7 679.3 371.3C679.3 370.5 679.7 369.6 680.2 369.6C680.8 369.6 681.7 372.3 682.0 371.5C684.0 364.9 684.6 350.8 685.8 351.1C687.1 351.4 687.2 364.2 688.2 372.9C689.1 380.7 689.9 384.5 690.6 392.3C691.7 406.0 691.7 425.1 692.7 426.5C693.5 427.6 693.3 406.1 695.0 398.7C695.4 397.1 697.6 405.6 697.9 403.9C699.6 393.7 699.2 364.4 699.9 369.0C701.3 378.1 702.1 438.6 703.2 438.3C704.3 438.0 704.5 371.5 705.4 367.7C706.1 364.8 706.4 423.9 707.3 421.4C708.5 418.3 709.8 347.4 710.6 353.6C711.9 363.4 711.8 466.9 712.4 461.4C713.2 454.3 713.3 340.0 714.3 322.2C714.8 313.0 715.4 400.6 716.0 393.9C716.9 383.2 716.8 280.9 717.9 278.9C718.9 277.0 719.2 342.1 721.3 384.2C721.9 395.9 723.7 416.5 724.7 413.3C726.5 407.7 727.1 362.8 728.2 362.3C729.2 361.8 729.4 417.2 729.9 410.9C731.0 398.5 731.1 315.6 732.2 315.4C733.3 315.2 734.2 401.1 735.4 410.0C736.2 415.5 736.4 354.3 737.2 351.5C737.9 349.3 738.3 397.3 739.1 397.5C739.9 397.7 740.3 347.0 741.0 352.5C742.4 362.7 743.0 434.7 744.4 436.7C745.6 438.5 745.6 391.2 747.5 362.0C747.5 361.3 749.1 361.3 749.2 362.0C752.1 394.8 753.1 448.9 754.9 445.6C757.1 441.7 756.7 358.4 759.1 344.0C760.3 337.1 761.4 375.8 763.8 392.3C764.0 393.7 765.6 387.2 765.7 388.7C767.1 416.6 766.4 461.5 767.5 465.7C768.3 468.9 769.0 420.1 770.6 407.1C771.1 403.4 772.0 426.5 772.7 423.8C774.3 417.5 775.3 381.3 776.2 384.5C777.5 389.4 777.4 449.5 778.3 444.0C779.7 435.2 780.1 375.8 781.9 348.9C782.2 344.3 782.6 361.7 783.7 365.1C784.0 366.2 785.3 358.6 785.4 360.2C786.5 371.7 785.5 384.8 786.7 397.9C786.8 399.0 788.3 394.6 788.6 395.5C790.4 400.8 791.5 418.0 792.0 413.3C794.4 390.8 794.5 331.8 795.8 327.5C796.8 324.2 796.4 371.9 797.7 394.2C797.8 396.2 798.6 388.3 799.3 388.3C800.0 388.3 800.8 395.7 801.1 394.2C802.2 388.7 802.4 367.9 802.9 370.8C803.9 376.2 804.0 414.0 804.8 414.9C805.6 415.8 805.9 391.1 806.9 375.3C807.0 373.5 807.6 372.6 807.7 370.8C808.9 348.3 809.4 311.2 810.1 314.4C811.1 318.6 810.9 378.8 811.9 389.4C812.4 394.5 813.2 348.5 813.7 353.5C814.6 363.8 814.5 421.7 815.4 427.5C816.0 431.4 816.6 397.7 817.4 377.8L817.4 586.7L350.5 586.7Z" fill="url(#cg)"/><line x1="341.2" y1="533.8" x2="818.6" y2="533.8" stroke="rgba(0,0,0,.1)" stroke-width="1"/><line x1="341.2" y1="480.9" x2="818.6" y2="480.9" stroke="rgba(0,0,0,.1)" stroke-width="1"/><line x1="341.2" y1="428.0" x2="818.6" y2="428.0" stroke="rgba(0,0,0,.1)" stroke-width="1"/><line x1="341.2" y1="375.1" x2="818.6" y2="375.1" stroke="rgba(0,0,0,.1)" stroke-width="1"/><line x1="341.2" y1="322.2" x2="818.6" y2="322.2" stroke="rgba(0,0,0,.1)" stroke-width="1"/><line x1="341.2" y1="269.3" x2="818.6" y2="269.3" stroke="rgba(0,0,0,.1)" stroke-width="1"/><line x1="411.4" y1="269.3" x2="411.4" y2="597.3" stroke="rgba(0,0,0,.1)" stroke-width="1"/><line x1="496.6" y1="269.3" x2="496.6" y2="597.3" stroke="rgba(0,0,0,.1)" stroke-width="1"/><line x1="581.8" y1="269.3" x2="581.8" y2="597.3" stroke="rgba(0,0,0,.1)" stroke-width="1"/><line x1="667.0" y1="269.3" x2="667.0" y2="597.3" stroke="rgba(0,0,0,.1)" stroke-width="1"/><line x1="752.2" y1="269.3" x2="752.2" y2="597.3" stroke="rgba(0,0,0,.1)" stroke-width="1"/><line x1="351.5" y1="269.3" x2="351.5" y2="586.7" stroke="rgba(0,0,0,.1)" stroke-width="1"/><line x1="341.2" y1="586.7" x2="351.5" y2="586.7" stroke="rgba(0,0,0,.1)" stroke-width="1"/><line x1="351" y1="586.7" x2="818.6" y2="586.7" stroke="rgba(0,0,0,.25)" stroke-width="1"/><path d="M350.5 451.2C351.1 460.1 351.9 479.8 352.1 473.5C353.5 436.8 353.1 361.8 354.5 343.6C355.2 334.8 355.6 381.1 357.3 406.0C357.5 408.7 359.0 414.7 359.2 412.5C360.6 392.6 360.3 350.5 361.1 350.8C361.9 351.1 362.1 410.0 363.0 414.0C363.6 416.9 364.2 368.5 364.9 368.2C365.6 367.9 365.9 415.2 366.5 412.5C367.3 408.9 367.6 357.4 368.5 352.5C369.1 349.3 369.1 385.4 370.2 392.3C370.6 395.0 372.0 372.5 372.4 376.7C374.3 397.8 374.1 424.5 376.0 455.6C376.0 456.1 377.2 456.1 377.2 455.6C378.4 432.8 377.9 420.6 379.1 397.5C379.1 396.7 380.2 396.6 380.3 395.8C381.5 383.7 381.6 364.7 382.4 365.1C383.2 365.6 383.1 385.4 384.4 398.0C384.5 398.6 385.8 397.4 385.9 398.0C387.2 410.0 387.3 434.9 387.7 429.4C388.7 415.4 388.8 345.9 389.5 349.2C390.3 353.2 390.4 447.1 391.5 447.5C392.6 447.9 393.0 364.7 394.9 351.2C395.8 344.7 396.9 388.7 398.5 397.5C399.1 400.6 399.7 379.5 400.2 381.0C401.0 383.3 401.2 408.5 401.9 406.8C402.8 404.4 403.0 372.4 404.2 370.9C405.2 369.7 406.9 406.5 407.3 400.0C408.8 377.2 408.4 294.6 409.1 297.5C409.9 300.8 409.7 388.8 410.9 415.4C411.2 422.8 411.7 395.6 413.0 382.6C413.2 381.0 414.5 380.6 414.6 379.0C415.8 360.2 415.6 331.7 416.3 331.6C417.0 331.5 417.0 372.8 417.9 378.6C418.4 381.7 419.2 352.5 419.8 353.9C420.6 355.7 420.6 385.2 421.4 386.6C422.0 387.8 422.5 359.2 423.2 360.4C424.0 361.8 424.2 390.7 425.1 393.1C425.7 394.8 426.4 366.9 427.0 370.7C428.5 380.0 429.2 431.4 430.3 425.9C432.1 416.8 432.7 334.8 434.2 334.4C435.6 334.0 435.7 388.4 437.5 424.0C437.5 424.8 438.7 426.1 438.8 425.4C440.9 403.2 441.5 368.1 442.8 366.8C443.9 365.7 443.9 427.2 444.8 419.4C446.7 402.2 448.3 299.2 449.8 304.3C451.7 310.7 451.8 440.8 453.4 448.0C454.7 453.6 455.9 338.0 457.0 336.1C458.0 334.3 457.8 431.2 458.7 438.8C459.3 444.0 459.7 375.5 460.7 368.3C461.3 364.0 461.9 413.1 462.7 410.0C463.9 405.5 464.9 349.6 465.9 349.4C466.9 349.2 466.4 401.9 467.9 409.2C468.7 413.1 469.7 381.1 471.6 377.4C472.6 375.3 473.8 387.8 475.2 394.7C476.5 401.3 477.9 414.5 478.4 411.3C479.8 402.6 479.0 366.3 480.1 365.1C481.1 364.0 482.5 404.6 483.6 405.5C484.6 406.3 484.9 363.6 485.3 369.4C486.3 382.8 486.6 453.6 487.3 453.3C488.0 453.0 487.8 387.5 488.9 367.8C489.2 362.5 489.9 394.3 490.8 390.7C492.7 382.5 494.6 336.9 495.9 338.4C497.4 340.2 496.7 388.1 497.8 399.0C498.2 403.1 499.1 373.2 499.6 376.1C500.6 381.8 500.3 422.1 501.5 420.5C503.0 418.6 504.8 371.1 506.4 367.3C507.5 364.7 507.7 408.1 508.4 404.4C509.6 398.2 510.3 341.5 511.3 342.6C512.4 343.8 512.9 412.3 513.7 410.0C514.6 407.3 514.7 322.4 515.5 330.2C516.8 343.0 517.6 453.7 518.9 461.4C519.9 467.1 519.6 400.1 521.1 363.7C521.2 362.3 522.6 365.5 522.8 367.0C524.0 378.6 523.4 388.8 524.5 396.3C524.8 398.0 525.8 388.5 526.2 389.9C527.4 394.3 527.8 415.0 528.3 410.9C529.9 399.2 530.7 345.9 531.5 350.4C532.7 356.9 532.2 432.9 533.4 438.3C534.3 442.3 535.3 381.5 536.7 374.0C537.5 369.9 537.9 407.2 538.7 409.2C539.3 410.7 539.8 380.4 540.4 382.6C541.3 385.9 541.6 422.3 542.3 423.0C543.0 423.6 543.3 383.8 543.9 385.8C544.7 388.4 545.2 440.9 545.7 434.3C546.7 420.7 546.1 363.5 547.6 335.3C547.8 330.5 548.2 346.0 550.0 351.8C550.3 352.8 552.7 351.1 552.8 352.2C554.6 365.7 553.6 374.0 554.9 388.3C555.0 389.1 556.1 389.1 556.2 389.9C557.4 408.1 557.1 437.5 558.1 435.9C559.3 434.0 560.0 386.0 561.7 381.0C562.8 377.8 564.1 416.8 565.1 415.4C566.3 413.8 566.1 371.1 567.0 373.5C568.2 376.7 569.6 434.7 570.4 429.4C571.7 420.8 571.6 342.2 572.4 338.7C573.1 335.8 573.2 407.7 574.1 413.3C574.7 417.1 574.7 369.8 576.1 362.3C576.8 358.8 578.2 383.6 579.4 385.8C580.2 387.2 580.7 368.2 581.1 371.2C582.2 380.5 582.3 417.7 583.0 416.5C583.8 415.2 584.0 366.8 584.8 365.0C585.5 363.5 585.8 404.0 586.7 408.4C587.3 411.0 587.7 380.4 588.5 382.6C589.7 385.9 591.1 428.7 591.7 422.2C593.2 406.6 592.8 328.5 593.9 327.4C595.0 326.4 595.2 387.3 597.2 416.8C597.4 419.7 598.4 409.9 599.3 408.4C599.7 407.8 600.2 412.8 600.4 411.7C601.6 404.0 601.8 384.6 602.7 386.6C604.1 389.6 604.6 420.2 606.1 424.3C606.9 426.7 607.2 402.4 608.5 402.8C609.9 403.2 611.7 429.5 612.7 426.2C614.9 419.3 615.5 374.5 616.5 377.2C617.9 380.7 617.5 433.8 618.7 441.5C619.3 445.7 619.6 420.6 621.1 406.8C621.6 401.9 623.5 391.1 623.8 394.7C625.4 417.7 624.7 478.8 625.8 473.3C627.4 465.6 629.0 372.5 630.7 361.7C631.7 355.1 631.8 423.4 632.7 429.7C633.3 433.6 633.8 387.9 634.5 387.4C635.2 387.0 635.6 430.8 636.1 427.5C636.9 422.4 637.3 361.8 637.9 366.4C638.8 373.2 639.0 455.1 639.8 456.1C640.5 457.0 640.4 398.6 641.6 371.2C641.7 368.3 642.7 382.3 643.0 380.2C644.2 372.4 644.5 343.6 645.4 346.5C646.7 350.9 647.3 394.4 648.5 398.4C649.3 401.1 649.7 361.8 650.4 363.4C651.2 365.5 651.4 406.8 652.2 407.6C652.9 408.3 652.9 370.2 654.2 367.3C655.1 365.3 657.0 398.9 657.7 395.2C659.1 388.0 658.7 337.8 659.5 340.1C660.5 342.9 660.7 400.3 662.4 408.0C663.3 412.3 665.4 364.2 666.1 370.0C667.6 382.8 667.0 456.9 668.0 454.4C669.2 451.5 670.4 361.7 671.6 356.7C672.5 352.8 672.8 437.8 673.4 432.3C674.3 424.4 674.6 322.6 675.3 323.2C676.0 323.8 676.1 422.8 677.1 435.1C677.7 442.1 678.1 396.7 679.3 371.3C679.3 370.5 679.7 369.6 680.2 369.6C680.8 369.6 681.7 372.3 682.0 371.5C684.0 364.9 684.6 350.8 685.8 351.1C687.1 351.4 687.2 364.2 688.2 372.9C689.1 380.7 689.9 384.5 690.6 392.3C691.7 406.0 691.7 425.1 692.7 426.5C693.5 427.6 693.3 406.1 695.0 398.7C695.4 397.1 697.6 405.6 697.9 403.9C699.6 393.7 699.2 364.4 699.9 369.0C701.3 378.1 702.1 438.6 703.2 438.3C704.3 438.0 704.5 371.5 705.4 367.7C706.1 364.8 706.4 423.9 707.3 421.4C708.5 418.3 709.8 347.4 710.6 353.6C711.9 363.4 711.8 466.9 712.4 461.4C713.2 454.3 713.3 340.0 714.3 322.2C714.8 313.0 715.4 400.6 716.0 393.9C716.9 383.2 716.8 280.9 717.9 278.9C718.9 277.0 719.2 342.1 721.3 384.2C721.9 395.9 723.7 416.5 724.7 413.3C726.5 407.7 727.1 362.8 728.2 362.3C729.2 361.8 729.4 417.2 729.9 410.9C731.0 398.5 731.1 315.6 732.2 315.4C733.3 315.2 734.2 401.1 735.4 410.0C736.2 415.5 736.4 354.3 737.2 351.5C737.9 349.3 738.3 397.3 739.1 397.5C739.9 397.7 740.3 347.0 741.0 352.5C742.4 362.7 743.0 434.7 744.4 436.7C745.6 438.5 745.6 391.2 747.5 362.0C747.5 361.3 749.1 361.3 749.2 362.0C752.1 394.8 753.1 448.9 754.9 445.6C757.1 441.7 756.7 358.4 759.1 344.0C760.3 337.1 761.4 375.8 763.8 392.3C764.0 393.7 765.6 387.2 765.7 388.7C767.1 416.6 766.4 461.5 767.5 465.7C768.3 468.9 769.0 420.1 770.6 407.1C771.1 403.4 772.0 426.5 772.7 423.8C774.3 417.5 775.3 381.3 776.2 384.5C777.5 389.4 777.4 449.5 778.3 444.0C779.7 435.2 780.1 375.8 781.9 348.9C782.2 344.3 782.6 361.7 783.7 365.1C784.0 366.2 785.3 358.6 785.4 360.2C786.5 371.7 785.5 384.8 786.7 397.9C786.8 399.0 788.3 394.6 788.6 395.5C790.4 400.8 791.5 418.0 792.0 413.3C794.4 390.8 794.5 331.8 795.8 327.5C796.8 324.2 796.4 371.9 797.7 394.2C797.8 396.2 798.6 388.3 799.3 388.3C800.0 388.3 800.8 395.7 801.1 394.2C802.2 388.7 802.4 367.9 802.9 370.8C803.9 376.2 804.0 414.0 804.8 414.9C805.6 415.8 805.9 391.1 806.9 375.3C807.0 373.5 807.6 372.6 807.7 370.8C808.9 348.3 809.4 311.2 810.1 314.4C811.1 318.6 810.9 378.8 811.9 389.4C812.4 394.5 813.2 348.5 813.7 353.5C814.6 363.8 814.5 421.7 815.4 427.5C816.0 431.4 816.6 397.7 817.4 377.8" fill="none" stroke="#15627a" stroke-width="1.5" stroke-linejoin="round"/><rect x="489.2" y="246.9" width="40" height="12" fill="#a5c3cb" stroke="#1d6a7e" stroke-width="1.5"/></svg>
<span class="t cv" style="left:535.50px;top:245.84px;font-size:12px;color:#666;">Power Supply 1 In</span>
<span class="t cv" style="left:307.48px;top:581.94px;font-size:10px;color:#666;">0 Watts</span>
<span class="t cv" style="left:301.91px;top:529.04px;font-size:10px;color:#666;">20 Watts</span>
<span class="t cv" style="left:301.91px;top:476.14px;font-size:10px;color:#666;">40 Watts</span>
<span class="t cv" style="left:301.91px;top:423.24px;font-size:10px;color:#666;">60 Watts</span>
<span class="t cv" style="left:301.91px;top:370.34px;font-size:10px;color:#666;">80 Watts</span>
<span class="t cv" style="left:296.35px;top:317.44px;font-size:10px;color:#666;">100 Watts</span>
<span class="t cv" style="left:296.35px;top:264.54px;font-size:10px;color:#666;">120 Watts</span>
<span class="t cv" style="left:392.38px;top:595.64px;font-size:12px;color:#666;">Aug 12</span>
<span class="t cv" style="left:477.58px;top:595.64px;font-size:12px;color:#666;">Aug 14</span>
<span class="t cv" style="left:562.78px;top:595.64px;font-size:12px;color:#666;">Aug 16</span>
<span class="t cv" style="left:647.98px;top:595.64px;font-size:12px;color:#666;">Aug 18</span>
<span class="t cv" style="left:733.18px;top:595.64px;font-size:12px;color:#666;">Aug 20</span>
<span class="t cv" style="left:572.33px;top:618.64px;font-size:12px;color:#666;">Date</span>
</body></html>
